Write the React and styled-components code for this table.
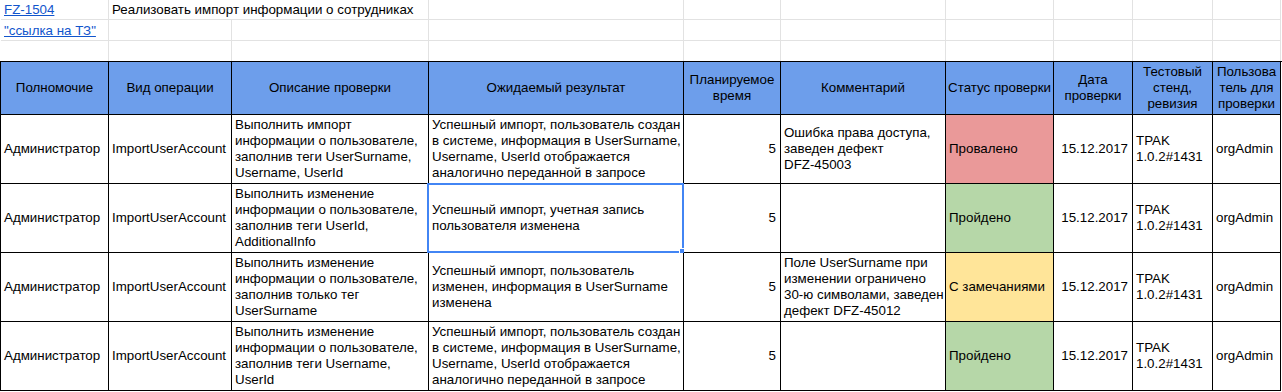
import React from "react";
import styled, { createGlobalStyle } from "styled-components";

const COLUMNS = "108px 123px 197px 255px 97px 165px 108px 79px 80px 68px";

const GlobalStyle = createGlobalStyle`
  body {
    margin: 0;
    background: #fff;
    font-family: "Liberation Sans", Arial, sans-serif;
    font-size: 13.33px;
    color: #000;
  }
`;

const Sheet = styled.div`
  width: 1282px;
`;

const TopGrid = styled.div`
  display: grid;
  grid-template-columns: ${COLUMNS};
  grid-template-rows: 20px 21px 20px;
  border-left: 1px solid transparent;
`;

const TopCell = styled.div`
  grid-column: span ${(p) => p.$span || 1};
  border-right: 1px solid #e2e2e2;
  border-bottom: ${(p) => (p.$last ? "none" : "1px solid #e2e2e2")};
  display: flex;
  align-items: center;
  padding: 0 3px;
  white-space: pre;
  overflow: visible;
`;

const SheetLink = styled.a`
  color: #1155cc;
  text-decoration: underline;
`;

const Table = styled.div`
  display: grid;
  grid-template-columns: ${COLUMNS};
  grid-template-rows: 53px repeat(4, 69px);
  border-left: 1px solid #000;
  border-top: 1px solid #000;
`;

const HeadCell = styled.div`
  background: #6d9eeb;
  border-right: 1px solid #000;
  border-bottom: 1px solid #000;
  display: flex;
  align-items: center;
  justify-content: center;
  text-align: center;
  line-height: 16px;
  padding: 0 3px;
  white-space: pre;
`;

const Cell = styled.div`
  position: relative;
  background: ${(p) => p.$fill || "#fff"};
  border-right: 1px solid #000;
  border-bottom: 1px solid #000;
  display: flex;
  align-items: center;
  justify-content: ${(p) => (p.$right ? "flex-end" : "flex-start")};
  text-align: ${(p) => (p.$right ? "right" : "left")};
  line-height: 16px;
  padding: 0 4px 0 3px;
  white-space: pre;
`;

const Selection = styled.div`
  position: absolute;
  top: -1px;
  left: -2px;
  right: -1px;
  bottom: -1px;
  border: 2px solid #4285f4;
  pointer-events: none;
`;

const Handle = styled.div`
  position: absolute;
  right: -4px;
  bottom: -4px;
  width: 5px;
  height: 5px;
  background: #4285f4;
  border: 1px solid #fff;
`;

const headers = [
  "Полномочие",
  "Вид операции",
  "Описание проверки",
  "Ожидаемый результат",
  "Планируемое\nвремя",
  "Комментарий",
  "Статус проверки",
  "Дата\nпроверки",
  "Тестовый\nстенд,\nревизия",
  "Пользова\nтель для\nпроверки",
];

const createdResult =
  "Успешный импорт, пользователь создан\nв системе, информация в UserSurname,\nUsername, UserId отображается\nаналогично переданной в запросе";

const rows = [
  {
    desc: "Выполнить импорт\nинформации о пользователе,\nзаполнив теги UserSurname,\nUsername, UserId",
    result: createdResult,
    comment: "Ошибка права доступа,\nзаведен дефект\nDFZ-45003",
    status: "Провалено",
    fill: "#ea9999",
  },
  {
    desc: "Выполнить изменение\nинформации о пользователе,\nзаполнив теги UserId,\nAdditionalInfo",
    result: "Успешный импорт, учетная запись\nпользователя изменена",
    comment: "",
    status: "Пройдено",
    fill: "#b6d7a8",
    selected: true,
  },
  {
    desc: "Выполнить изменение\nинформации о пользователе,\nзаполнив только тег\nUserSurname",
    result: "Успешный импорт, пользователь\nизменен, информация в UserSurname\nизменена",
    comment: "Поле UserSurname при\nизменении ограничено\n30-ю символами, заведен\nдефект DFZ-45012",
    status: "С замечаниями",
    fill: "#ffe599",
  },
  {
    desc: "Выполнить изменение\nинформации о пользователе,\nзаполнив теги Username,\nUserId",
    result: createdResult,
    comment: "",
    status: "Пройдено",
    fill: "#b6d7a8",
  },
];

const emptyTail = [4, 5, 6, 7, 8, 9, 10];

const App = () => {
  return (
    <Sheet>
      <GlobalStyle />
      <TopGrid>
        <TopCell>
          <SheetLink>FZ-1504</SheetLink>
        </TopCell>
        <TopCell $span={2}>Реализовать импорт информации о сотрудниках</TopCell>
        {emptyTail.map((i) => (
          <TopCell key={"a" + i} />
        ))}
        <TopCell>
          <SheetLink>"ссылка на ТЗ"</SheetLink>
        </TopCell>
        <TopCell />
        <TopCell />
        {emptyTail.map((i) => (
          <TopCell key={"b" + i} />
        ))}
        <TopCell $last />
        <TopCell $last />
        <TopCell $last />
        {emptyTail.map((i) => (
          <TopCell $last key={"c" + i} />
        ))}
      </TopGrid>
      <Table>
        {headers.map((h, i) => (
          <HeadCell key={i}>{h}</HeadCell>
        ))}
        {rows.map((r, key) => (
          <React.Fragment key={key}>
            <Cell>Администратор</Cell>
            <Cell>ImportUserAccount</Cell>
            <Cell>{r.desc}</Cell>
            <Cell>
              {r.result}
              {r.selected && (
                <Selection>
                  <Handle />
                </Selection>
              )}
            </Cell>
            <Cell $right>5</Cell>
            <Cell>{r.comment}</Cell>
            <Cell $fill={r.fill}>{r.status}</Cell>
            <Cell $right>15.12.2017</Cell>
            <Cell>{"TPAK\n1.0.2#1431"}</Cell>
            <Cell>orgAdmin</Cell>
          </React.Fragment>
        ))}
      </Table>
    </Sheet>
  );
};

export default App;
